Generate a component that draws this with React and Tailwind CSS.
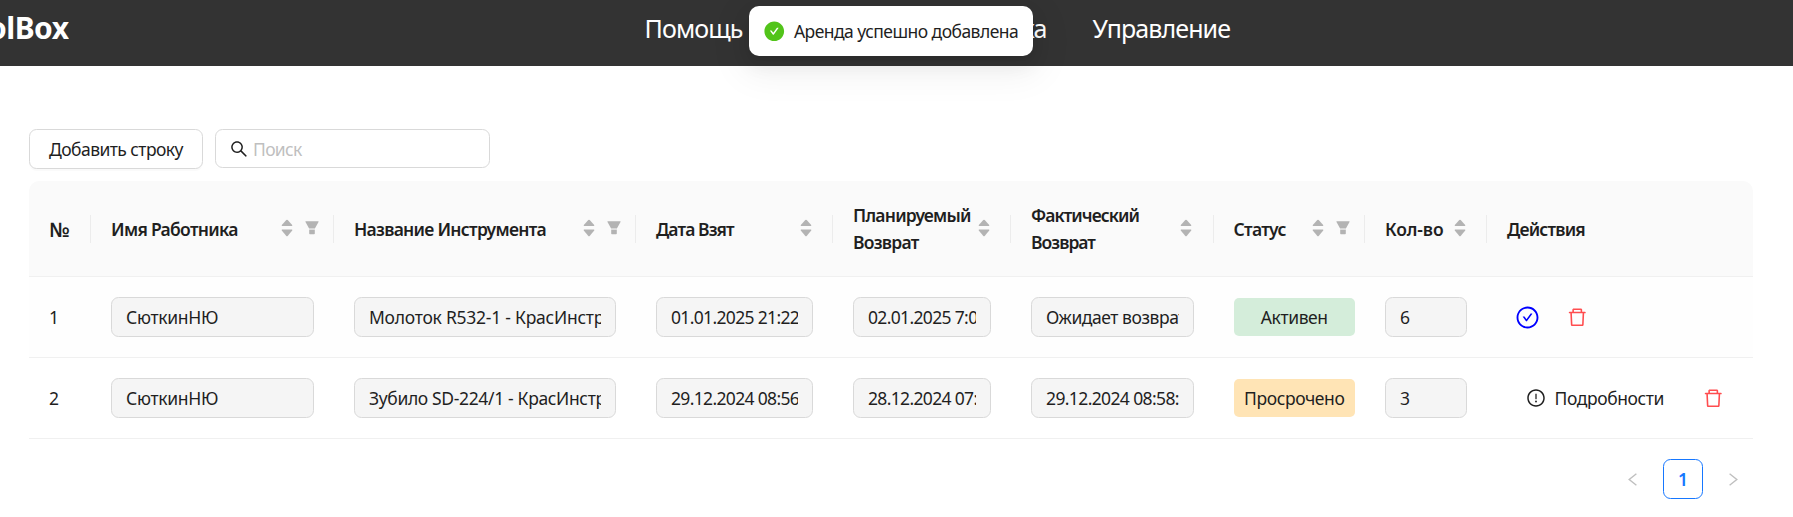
import React from 'react'
import {
  AiOutlineSearch,
  AiOutlineDelete,
  AiOutlineCheckCircle,
  AiOutlineExclamationCircle,
  AiFillCheckCircle,
} from 'react-icons/ai'

const GRID = 'grid grid-cols-[62px_243px_302px_197px_178px_202.5px_151.5px_122px_266px]'

const COLUMNS = [
  { title: '№', track: 'text-[20px] tracking-normal' },
  { title: 'Имя Работника', sort: true, filter: true, track: 'tracking-[-0.7px]' },
  { title: 'Название Инструмента', sort: true, filter: true, track: 'tracking-[-0.72px]' },
  { title: 'Дата Взят', sort: true, track: 'tracking-[-0.9px]' },
  { title: 'Планируемый Возврат', sort: true, track: 'tracking-[-0.76px]' },
  { title: 'Фактический Возврат', sort: true, track: 'tracking-[-0.97px]' },
  { title: 'Статус', sort: true, filter: true, track: 'tracking-[-0.7px]' },
  { title: 'Кол-во', sort: true, track: 'tracking-[-0.1px]' },
  { title: 'Действия', track: 'tracking-[-0.8px]' },
]

const ROWS = [
  {
    id: 1,
    worker: 'СюткинНЮ',
    tool: 'Молоток R532-1 - КрасИнструмент',
    toolTrack: 'tracking-[-0.25px]',
    taken: '01.01.2025 21:22:10',
    planned: '02.01.2025 7:00:00',
    actual: 'Ожидает возврата',
    status: 'Активен',
    statusClass: 'bg-[#d4edda]',
    qty: 6,
    active: true,
  },
  {
    id: 2,
    worker: 'СюткинНЮ',
    tool: 'Зубило SD-224/1 - КрасИнструмент',
    toolTrack: 'tracking-[-0.35px]',
    taken: '29.12.2024 08:56:12',
    planned: '28.12.2024 07:00:00',
    actual: '29.12.2024 08:58:40',
    status: 'Просрочено',
    statusClass: 'bg-[#ffe4b5]',
    qty: 3,
    active: false,
  },
]

function Sorter() {
  return (
    <svg className="h-[18px] w-[12px] shrink-0" viewBox="0 0 12 18" fill="#b3b3b3">
      <path d="M5.3 1.1Q6 .4 6.7 1.1L11.2 6.1Q11.6 7 10.8 7H1.2Q.4 7 .8 6.1Z" />
      <path d="M5.3 16.9Q6 17.6 6.7 16.9L11.2 11.4Q11.6 10.5 10.8 10.5H1.2Q.4 10.5 .8 11.4Z" />
    </svg>
  )
}

function Funnel() {
  return (
    <svg className="h-[14px] w-[14px] shrink-0" viewBox="0 0 14 14" fill="#b3b3b3">
      <path d="M.8.3H13.2Q13.9.4 13.5 1.1L9.9 7.6H4.1L.5 1.1Q.1.4.8.3Z" />
      <path d="M4.2 8.2H9.8V9H4.2Z" opacity=".5" />
      <path d="M4.2 9H9.8V12.6Q9.8 13.3 9.1 13.3H4.9Q4.2 13.3 4.2 12.6Z" />
    </svg>
  )
}

function HeadCell({ column, last }) {
  const pad = column.filter ? 'pr-[14.5px]' : column.sort ? 'pr-[20.5px]' : ''
  return (
    <div className="flex items-center">
      <div className={`flex min-w-0 flex-1 items-center justify-between pl-5 ${pad}`}>
        <span className={`pt-px font-semibold leading-[27px] ${column.sort && !column.filter ? 'min-w-0' : 'whitespace-nowrap'} ${column.track}`}>
          {column.title}
        </span>
        {column.sort && (
          <span className="-mt-[1px] flex shrink-0 items-center gap-3">
            <Sorter />
            {column.filter && <Funnel />}
          </span>
        )}
      </div>
      {!last && <span className="h-7 w-px shrink-0 bg-[#ececec]" />}
    </div>
  )
}

function Field({ children, track = 'tracking-[-0.5px]' }) {
  return (
    <div className="px-5">
      <div className="flex h-10 items-center rounded-[7.5px] border border-[#d9d9d9] bg-[#f5f5f5] px-[14px]">
        <div className={`w-full overflow-hidden whitespace-nowrap pt-[2px] ${track}`}>{children}</div>
      </div>
    </div>
  )
}

function Row({ row }) {
  return (
    <div className={`${GRID} h-[81px] items-center border-b border-[#f0f0f0] ${row.active ? 'bg-[#fefefe]' : ''}`}>
      <div className="pl-5 pt-[2px]">{row.id}</div>
      <Field track="tracking-[-0.29px]">{row.worker}</Field>
      <Field track={row.toolTrack}>{row.tool}</Field>
      <Field track="tracking-[-0.66px]">{row.taken}</Field>
      <Field track="tracking-[-0.66px]">{row.planned}</Field>
      <Field track={row.active ? 'tracking-[-0.45px]' : 'tracking-[-0.62px]'}>{row.actual}</Field>
      <div className="pl-5 pr-[10px]">
        <div className={`flex h-[38px] items-center justify-center rounded-[5px] pt-[2px] tracking-[-0.4px] ${row.statusClass}`}>
          {row.status}
        </div>
      </div>
      <Field>{row.qty}</Field>
      {row.active ? (
        <div className="flex items-center pl-[28px]">
          <AiOutlineCheckCircle className="h-[25px] w-[25px] text-[#0000ff]" />
          <AiOutlineDelete className="ml-[25.5px] h-[22.5px] w-[22.5px] text-[#ff4d4f]" />
        </div>
      ) : (
        <div className="flex items-center pl-[38.5px]">
          <AiOutlineExclamationCircle className="h-5 w-5" />
          <span className="ml-[9px] w-[110px] whitespace-nowrap pt-[2px] tracking-[-0.41px]">Подробности</span>
          <AiOutlineDelete className="ml-[37px] h-[22.5px] w-[22.5px] text-[#ff4d4f]" />
        </div>
      )}
    </div>
  )
}

function Chevron({ flip }) {
  return (
    <svg
      className={`h-[13px] w-[9px] ${flip ? '-scale-x-100' : ''}`}
      viewBox="0 0 9 13"
      fill="none"
      stroke="#bfbfbf"
      strokeWidth="1.4"
    >
      <path d="M8.4.8 1.2 6.5l7.2 5.7" />
    </svg>
  )
}

export default function App() {
  return (
    <div className="relative h-[517px] overflow-hidden bg-white font-['Noto_Sans','Open_Sans',sans-serif] text-[17.5px] leading-[27.5px] text-[#1f1f1f]">
      <header className="flex h-[66px] items-start bg-[#333333] pt-[8px] text-white">
        <div className="flex w-[68.5px] justify-end overflow-hidden text-[30px] font-bold leading-[40px] tracking-[-0.55px]">
          ToolBox
        </div>
        <nav className="ml-[576px] flex whitespace-nowrap text-[25px] leading-[40px] tracking-[-0.9px]">
          <a className="w-[142px]">Помощь</a>
          <a className="w-[260px] text-right">Техподдержка</a>
          <a className="ml-[46px]">Управление</a>
        </nav>
      </header>

      <main className="ml-[29px] w-[1724px] pt-[63px]">
        <div className="flex items-start gap-3">
          <button className="h-10 w-[174px] rounded-[7.5px] border border-[#d9d9d9] bg-white pt-[2px] tracking-[-0.56px] whitespace-nowrap shadow-[0_2px_0_rgba(0,0,0,0.02)]">
            Добавить строку
          </button>
          <div className="flex h-[39px] w-[275px] items-center rounded-[7.5px] border border-[#d9d9d9] pl-[13px]">
            <AiOutlineSearch className="h-5 w-5" />
            <span className="ml-[4px] pt-[2px] tracking-[-0.7px] text-[#bfbfbf]">Поиск</span>
          </div>
        </div>

        <section className="mt-3">
          <div className={`${GRID} h-24 rounded-t-[10px] border-b border-[#f0f0f0] bg-[#fafafa]`}>
            {COLUMNS.map((c, i) => (
              <HeadCell key={c.title} column={c} last={i === COLUMNS.length - 1} />
            ))}
          </div>
          {ROWS.map((r) => (
            <Row key={r.id} row={r} />
          ))}
        </section>

        <div className="mt-5 flex h-10 items-center justify-end pr-[15px]">
          <Chevron />
          <span className="mx-[26px] flex h-10 w-10 items-center justify-center rounded-[7.5px] border border-[#1677ff] pt-[2px] font-semibold text-[#1677ff]">
            1
          </span>
          <Chevron flip />
        </div>
      </main>

      <div className="absolute left-[749px] top-[6px] flex h-[50px] w-[284px] items-center rounded-[10px] bg-white pl-[13.5px] shadow-[0_7.5px_20px_0_rgba(0,0,0,0.08),0_3.75px_7.5px_-5px_rgba(0,0,0,0.12),0_11px_35px_10px_rgba(0,0,0,0.05)]">
        <AiFillCheckCircle className="h-[22.5px] w-[22.5px] text-[#52c41a]" />
        <span className="ml-[9px] pt-px whitespace-nowrap tracking-[-0.54px]">Аренда успешно добавлена</span>
      </div>
    </div>
  )
}
